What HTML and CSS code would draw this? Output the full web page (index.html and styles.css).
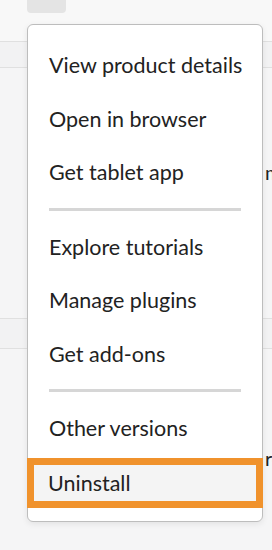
FILE: index.html
```html
<!DOCTYPE html>
<html lang="en">
<head>
  <meta charset="UTF-8" />
  <title>App menu</title>
  <link rel="stylesheet" href="styles.css">
</head>
<body>
  <div class="page">
    <section class="card card-top">
      <div class="thumb"></div>
    </section>
    <section class="card card-app">
      <div class="app-row row-1">
        <span class="app-name">Illustrator</span>
        <span class="app-more">more</span>
      </div>
    </section>
    <section class="card card-app second">
      <div class="app-row row-2">
        <span class="app-name">Photoshop</span>
        <span class="app-more">ready</span>
      </div>
    </section>

    <div class="menu">
      <ul class="menu-group">
        <li>View product details</li>
        <li>Open in browser</li>
        <li>Get tablet app</li>
      </ul>
      <hr class="divider">
      <ul class="menu-group">
        <li>Explore tutorials</li>
        <li>Manage plugins</li>
        <li>Get add-ons</li>
      </ul>
      <hr class="divider">
      <ul class="menu-group">
        <li>Other versions</li>
        <li class="highlight">Uninstall</li>
      </ul>
    </div>
  </div>
</body>
</html>
```

FILE: styles.css
```css
body {
  margin: 0;
  background-color: #f2f2f3;
  font-family: 'Lato', sans-serif;
  color: #222;
  overflow: hidden;
}
.page {
  position: relative;
  width: 272px;
  height: 550px;
}
.card {
  background: #f8f8f8;
  border-bottom: 1px solid #e0e0e0;
  overflow: hidden;
}
.card-top {
  height: 41px;
}
.thumb {
  margin-left: 27px;
  width: 39px;
  height: 13px;
  background: #e4e4e4;
  border-radius: 0 0 4px 4px;
}
.card-app {
  margin-top: 25px;
  border-top: 1px solid #e0e0e0;
  height: 250px;
  background: #f5f5f6;
}
.card-app.second {
  margin-top: 29px;
  height: 220px;
}
.app-row {
  display: flex;
  white-space: nowrap;
  font-size: 20px;
}
.app-name {
  width: 265px;
  flex-shrink: 0;
  padding-left: 30px;
  box-sizing: border-box;
}
.row-1 {
  margin-top: 92px;
}
.row-2 {
  margin-top: 97px;
}
.menu {
  position: absolute;
  top: 24px;
  left: 27px;
  width: 236px;
  height: 498px;
  background: #fff;
  border: 1px solid #bdbdbd;
  border-radius: 6px;
  box-shadow: 0 2px 6px rgba(0,0,0,0.08);
  box-sizing: border-box;
  padding-top: 14px;
}
.menu-group {
  list-style: none;
  margin: 0;
  padding: 0;
}
.menu-group li {
  height: 53.5px;
  line-height: 53.5px;
  padding-left: 21px;
  font-size: 21.5px;
  white-space: nowrap;
}
.divider {
  border: none;
  height: 3px;
  background: #d6d6d6;
  margin: 8px 21px 10px 21px;
}
.menu-group li.highlight {
  height: 50px;
  line-height: 36px;
  border: 7px solid #f0922c;
  margin: 2px -1px 0;
  padding-left: 14px;
  background: #f4f4f4;
  box-sizing: border-box;
}
```
